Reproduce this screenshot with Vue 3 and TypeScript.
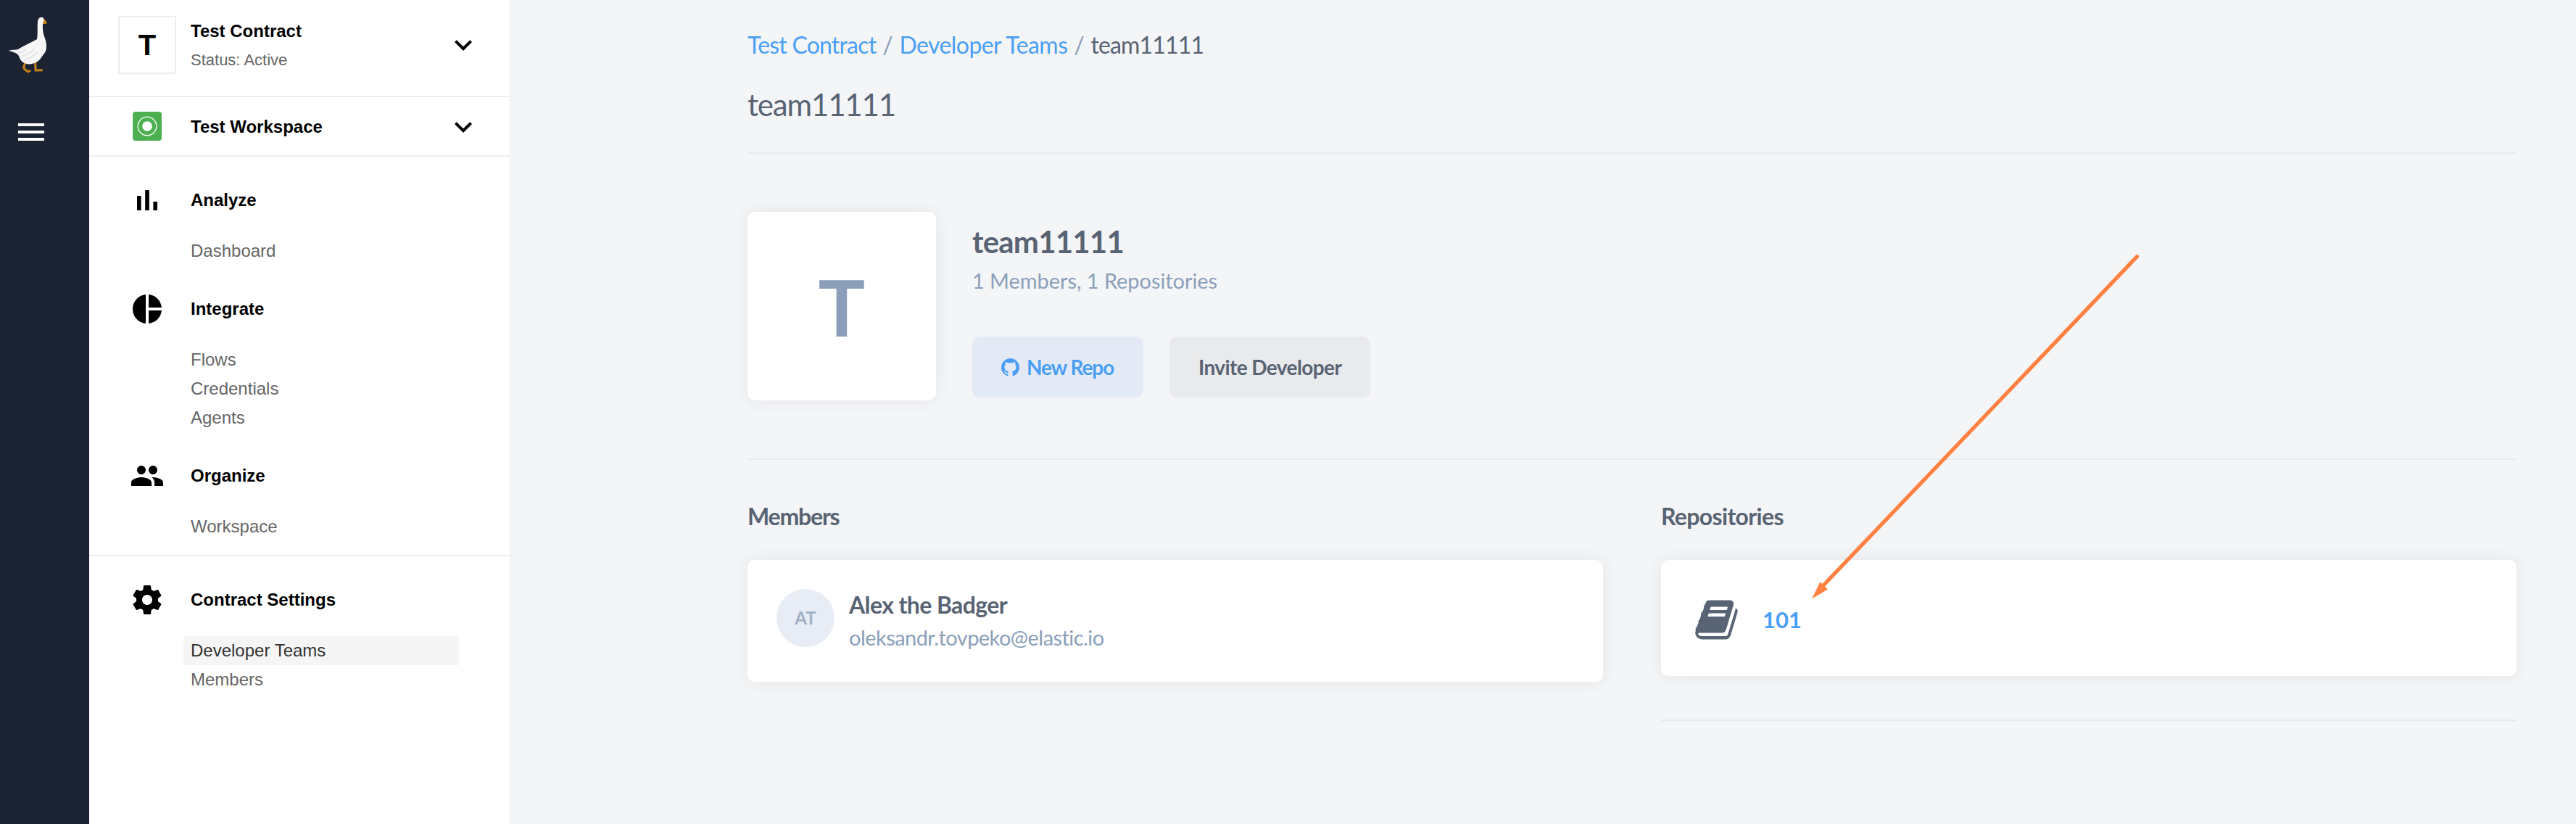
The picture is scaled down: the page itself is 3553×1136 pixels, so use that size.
<script setup lang="ts">
interface NavSection {
  title: string
  icon: string
  items: string[]
  separated?: boolean
}

const activeItem = 'Developer Teams'

const sections: NavSection[] = [
  {
    title: 'Analyze',
    icon: 'M5 9h2.400v10H5zM10.600 5h2.800v14h-2.800zM16.200 13H19v6h-2.800zM7 9h.8v10H7z',
    items: ['Dashboard'],
  },
  {
    title: 'Integrate',
    icon: 'M11 2v20c-5.07-.5-9-4.79-9-10s3.93-9.5 9-10zm2.03 0v8.99H22c-.47-4.74-4.24-8.52-8.97-8.99zm0 11.01V22c4.74-.47 8.5-4.25 8.97-8.99h-8.97z',
    items: ['Flows', 'Credentials', 'Agents'],
  },
  {
    title: 'Organize',
    icon: 'M16 11c1.66 0 2.99-1.34 2.99-3S17.66 5 16 5c-1.66 0-3 1.34-3 3s1.34 3 3 3zm-8 0c1.66 0 2.99-1.34 2.99-3S9.66 5 8 5C6.34 5 5 6.34 5 8s1.34 3 3 3zm0 2c-2.33 0-7 1.17-7 3.5V19h14v-2.5c0-2.33-4.67-3.5-7-3.5zm8 0c-.29 0-.62.02-.97.05 1.16.84 1.97 1.97 1.97 3.45V19h6v-2.5c0-2.33-4.67-3.5-7-3.5z',
    items: ['Workspace'],
  },
  {
    title: 'Contract Settings',
    icon: 'M19.43 12.98c.04-.32.07-.64.07-.98s-.03-.66-.07-.98l2.11-1.65c.19-.15.24-.42.12-.64l-2-3.46c-.12-.22-.39-.3-.61-.22l-2.49 1c-.52-.4-1.08-.73-1.690-.98l-.38-2.65C14.460 2.180 14.250 2 14 2h-4c-.25 0-.46.18-.49.42l-.38 2.65c-.61.25-1.170.59-1.690.98l-2.490-1c-.23-.09-.49 0-.61.22l-2 3.460c-.13.22-.07.49.12.64l2.110 1.650c-.04.32-.07.65-.07.98s.03.66.07.98l-2.110 1.650c-.19.15-.24.42-.12.64l2 3.460c.12.22.39.3.61.22l2.490-1c.52.4 1.080.73 1.690.98l.38 2.650c.03.24.24.42.49.42h4c.25 0 .46-.18.49-.42l.38-2.650c.61-.25 1.170-.59 1.690-.98l2.490 1c.23.09.49 0 .61-.22l2-3.460c.12-.22.07-.49-.12-.64l-2.110-1.650zM12 15.500c-1.930 0-3.500-1.570-3.500-3.500s1.570-3.500 3.500-3.500 3.500 1.570 3.500 3.500-1.570 3.500-3.500 3.500z',
    items: ['Developer Teams', 'Members'],
    separated: true,
  },
]
</script>

<template>
  <div class="app">
    <aside class="rail">
      <svg class="goose" width="60" height="80" viewBox="10 22 60 80">
        <path d="M36 84c-1 4-4 6-3 10l3 3 3 2 3-2" fill="none" stroke="#c88415" stroke-width="3" />
        <path d="M48.500 84l.7 13 9.500-.2" fill="none" stroke="#c88415" stroke-width="3" />
        <path d="M59.500 25.500l3.500 3 2 4-6 .4z" fill="#d08a14" />
        <path d="M52 29c.5-3.500 3-5.200 5.500-5.200 2 0 3.200 1.300 3 3.200-.2 2-1.300 3.500-1.500 6.500-.4 6 .2 12 2.500 18 2 5 3 10 2.300 16-.8 5-4.800 8.500-7.300 12.500-3 4.500-9.500 8.500-16.500 8.500-5.500-.5-10.500-3-12.500-7.500-1-2.500-1.300-4-3.500-6.500-3.500-2.500-8-3.500-12-4.500 3-1.500 9-1 13-2C32 63 43 59 51 54c1.300-6 .3-16 1-25z" fill="#f6f6f7" />
        <path d="M29 79c6-4 13-5 18-11M33 83c8-2 14-6 19-12M25 73c5 0 8-2 11-5" fill="none" stroke="#dedee2" stroke-width="1.200" />
      </svg>
      <div class="burger"><i></i><i></i><i></i></div>
    </aside>

    <nav class="sidebar">
      <header class="contract">
        <div class="contract-logo">T</div>
        <div class="contract-text">
          <div class="strong">Test Contract</div>
          <div class="status">Status: Active</div>
        </div>
        <svg class="chevron" viewBox="0 0 24 24"><path d="M7.410 8.590L12 13.170l4.590-4.580L18 10l-6 6-6-6z" /></svg>
      </header>
      <div class="workspace">
        <svg class="workspace-icon" viewBox="0 0 40 40">
          <rect width="40" height="40" rx="4" fill="#4caf50" />
          <circle cx="20" cy="20" r="12.800" fill="none" stroke="#fff" stroke-width="1.300" />
          <circle cx="20" cy="20" r="6.800" fill="#fff" />
        </svg>
        <div class="strong workspace-name">Test Workspace</div>
        <svg class="chevron" viewBox="0 0 24 24"><path d="M7.410 8.590L12 13.170l4.590-4.580L18 10l-6 6-6-6z" /></svg>
      </div>
      <section v-for="s in sections" :key="s.title" class="nav-section" :class="{ separated: s.separated }">
        <div class="nav-head">
          <svg class="nav-icon" viewBox="0 0 24 24"><path :d="s.icon" /></svg>
          <span>{{ s.title }}</span>
        </div>
        <ul class="nav-items">
          <li v-for="i in s.items" :key="i" :class="{ active: i === activeItem }">{{ i }}</li>
        </ul>
      </section>
    </nav>

    <main class="main">
      <div class="crumbs">
        <a class="crumb-contract">Test Contract</a><span class="sep">/</span><a class="crumb-teams">Developer Teams</a><span class="sep">/</span><span class="crumb-current">team11111</span>
      </div>
      <h1>team11111</h1>
      <hr />
      <div class="team">
        <div class="team-logo card">T</div>
        <div class="team-info">
          <h2>team11111</h2>
          <p class="team-meta">1 Members, 1 Repositories</p>
          <div class="actions">
            <button class="btn btn-repo">
              <svg class="github" viewBox="128 128 1536 1536"><path d="M896 128q209 0 385.500 103t279.500 279.500 103 385.500q0 251-146.500 451.500t-378.500 277.500q-27 5-40-7t-13-30q0-3 .5-76.500t.5-134.500q0-97-52-142 57-6 102.500-18t94-39 81-66.500 53-105 20.500-150.500q0-119-79-206 37-91-8-204-28-9-81 11t-92 44l-38 24q-93-26-192-26t-192 26q-16-11-42.500-27t-83.500-38.500-85-13.500q-45 113-8 204-79 87-79 206 0 85 20.500 150t52.500 105 80.500 67 94 39 102.500 18q-39 36-49 103-21 10-45 15t-57 5-65.500-21.500-55.500-62.500q-19-32-48.500-52t-49.500-24l-20-3q-21 0-29 4.500t-5 11.500 9 14 13 12l7 5q22 10 43.500 38t31.500 51l10 23q13 38 44 61.500t67 30 69.500 7 55.500-3.500l23-4q0 38 .5 88.500t.5 54.500q0 18-13 30t-40 7q-232-77-378.500-277.500t-146.500-451.500q0-209 103-385.500t279.500-279.500 385.500-103z" /></svg>
              <span>New Repo</span>
            </button>
            <button class="btn btn-invite">Invite Developer</button>
          </div>
        </div>
      </div>
      <hr />
      <div class="columns">
        <section>
          <h3 class="members-title">Members</h3>
          <div class="card member">
            <div class="avatar">AT</div>
            <div>
              <div class="member-name">Alex the Badger</div>
              <div class="member-mail">oleksandr.tovpeko@elastic.io</div>
            </div>
          </div>
        </section>
        <section>
          <h3>Repositories</h3>
          <div class="card repo">
            <svg class="book" viewBox="0 0 1792 1792"><path d="M1703 478q40 57 18 129l-275 906q-19 64-76.500 107.500t-122.500 43.500h-923q-77 0-148.500-53.500t-99.500-131.500q-24-67-2-127 0-4 3-27t4-37q1-8-3-21.500t-3-19.500q2-11 8-21t16.500-23.500 16.500-23.500q23-38 45-91.500t30-91.500q3-10 .5-30t-.5-28q3-11 17-28t17-23q21-36 42-92t25-90q1-9-2.500-32t.5-28q4-13 22-30.500t22-22.500q19-26 42.500-84.500t27.500-96.500q1-8-3-25.500t-2-26.500q2-8 9-18t18-23 17-21q8-12 16.500-30.500t15-35 16-36 19.500-32 26.500-23.500 36-11.500 47.500 5.500l-1 3q38-9 51-9h761q74 0 114 56t18 130l-274 906q-36 119-71.500 153.500t-128.500 34.500h-869q-27 0-38 15-11 16-1 43 24 70 144 70h923q29 0 56-15.500t35-41.500l300-987q7-22 5-57 38 15 59 43zm-1064 2q-4 13 2 22.500t20 9.500h608q13 0 25.500-9.500t16.500-22.500l21-64q4-13-2-22.500t-20-9.500h-608q-13 0-25.500 9.500t-16.500 22.500zm-83 256q-4 13 2 22.500t20 9.500h608q13 0 25.500-9.500t16.500-22.500l21-64q4-13-2-22.500t-20-9.500h-608q-13 0-25.500 9.500t-16.500 22.500z" /></svg>
            <a class="repo-name">101</a>
          </div>
          <hr class="repo-rule" />
        </section>
      </div>
    </main>

    <svg class="arrow" width="460" height="484" viewBox="2494 348 460 484">
      <path d="M2947.600 353.700L2513 809" stroke="#ff8142" stroke-width="5.300" stroke-linecap="round" />
      <path d="M2499 825.500L2510.500 802.300L2521 812.500z" fill="#ff8142" />
    </svg>
  </div>
</template>

<style>
body {
  background: #f4f5f7;
}
</style>

<style scoped>
.app {
  position: relative;
  display: flex;
  height: 1136px;
  overflow: hidden;
  background: #f4f5f7;
  font-family: Lato, sans-serif;
  color: #586373;
}
h1, h2, h3, p, ul {
  margin: 0;
  padding: 0;
}
.rail {
  width: 123px;
  flex: none;
  background: #1b2232;
}
.goose {
  display: block;
  margin: 22px 0 0 10px;
}
.burger {
  display: flex;
  flex-direction: column;
  gap: 6px;
  margin: 68px 0 0 25px;
}
.burger i {
  width: 36px;
  height: 4px;
  background: #fff;
}
.sidebar {
  width: 580px;
  flex: none;
  background: #fff;
  border-right: 2px solid #f0f1f1;
  font-family: "Liberation Sans", Arial, sans-serif;
  font-size: 24px;
  color: #666;
}
.contract {
  display: flex;
  height: 132px;
  border-bottom: 2px solid #eee;
}
.contract-logo {
  box-sizing: border-box;
  width: 80px;
  height: 80px;
  margin: 22px 20px 0 40px;
  border: 2px solid #eee;
  text-align: center;
  font-size: 40px;
  font-weight: 700;
  line-height: 76px;
  color: #000;
}
.strong {
  font-weight: 700;
  line-height: 32px;
  color: #000;
}
.contract-text {
  flex: 1;
  padding-top: 27px;
}
.status {
  margin-top: 8px;
  font-size: 22px;
  line-height: 32px;
}
.chevron {
  width: 48px;
  height: 48px;
  margin: 38px 40px 0 0;
}
.workspace {
  display: flex;
  height: 80px;
  border-bottom: 2px solid #eee;
}
.workspace-icon {
  width: 40px;
  height: 40px;
  margin: 20px 40px 0 60px;
}
.workspace-name {
  flex: 1;
  padding-top: 25px;
}
.workspace .chevron {
  margin-top: 17px;
}
.nav-section {
  padding-top: 40px;
}
.nav-section.separated {
  margin-top: 19px;
  border-top: 2px solid #eee;
}
.nav-head {
  display: flex;
  align-items: center;
  height: 40px;
  font-weight: 700;
  color: #000;
}
.nav-head span {
  line-height: 42px;
}
.nav-icon {
  width: 48px;
  height: 48px;
  margin: 0 36px 0 56px;
}
.nav-items {
  margin: 30px 70px 0 130px;
  list-style: none;
  line-height: 40px;
}
.nav-items li {
  padding-left: 10px;
}
.nav-items .active {
  background: #f5f5f5;
  color: #333;
}
.main {
  flex: 1;
  padding: 42px 82px 0 326px;
}
hr {
  height: 2px;
  margin: 0;
  border: 0;
  background: #e9ebec;
}
.crumbs {
  display: flex;
  font-size: 32px;
  line-height: 40px;
}
a {
  color: #4a9ff5;
}
.sep {
  width: 32px;
  text-align: center;
  color: #8b9fba;
}
.crumb-contract {
  letter-spacing: -0.8px;
}
.crumb-teams {
  letter-spacing: -0.55px;
}
.crumb-current {
  letter-spacing: -0.85px;
}
h1 {
  margin: 34px 0 38px;
  font-size: 42px;
  font-weight: 400;
  line-height: 56px;
  letter-spacing: -1.15px;
}
.card {
  border-radius: 10px;
  background: #fff;
  box-shadow: 0 0 24px rgba(0, 0, 0, 0.07);
}
.team {
  display: flex;
  gap: 50px;
  height: 340px;
  padding-top: 80px;
}
.team-logo {
  width: 260px;
  height: 260px;
  text-align: center;
  font-size: 108px;
  font-weight: 700;
  line-height: 260px;
  color: #8b9fba;
}
h2 {
  margin-top: 16px;
  font-size: 42px;
  line-height: 50px;
  letter-spacing: -0.8px;
}
.team-meta {
  margin-top: 9px;
  font-size: 29px;
  line-height: 40px;
  letter-spacing: -0.06px;
  color: #8b9fba;
}
.actions {
  display: flex;
  gap: 36px;
  margin-top: 57px;
}
.btn {
  display: flex;
  align-items: center;
  height: 84px;
  padding: 0 0 0 40px;
  border: 0;
  border-radius: 10px;
  font: 700 28px/84px Lato, sans-serif;
}
.btn-repo {
  width: 236px;
  background: #e3eaf6;
  color: #4a9ff5;
  letter-spacing: -1.05px;
}
.btn-invite {
  width: 277px;
  background: #e9eaec;
  color: #586373;
  letter-spacing: -0.6px;
}
.github {
  width: 25px;
  height: 25px;
  margin-right: 10px;
  fill: #4a9ff5;
}
.columns {
  display: grid;
  grid-template-columns: 1180px 1180px;
  gap: 80px;
  padding-top: 58px;
}
h3 {
  margin-bottom: 40px;
  font-size: 32px;
  line-height: 40px;
  letter-spacing: -0.65px;
}
h3.members-title {
  letter-spacing: -1.2px;
}
.member {
  display: flex;
  box-sizing: border-box;
  height: 168px;
  padding: 40px;
}
.avatar {
  width: 80px;
  height: 80px;
  margin-right: 20px;
  border-radius: 50%;
  background: #e8edf5;
  text-align: center;
  font-size: 24px;
  font-weight: 700;
  line-height: 80px;
  color: #9fb0c7;
}
.member-name {
  font-size: 32px;
  font-weight: 700;
  line-height: 44px;
  letter-spacing: -0.6px;
}
.member-mail {
  margin-top: 3px;
  font-size: 29px;
  line-height: 40px;
  letter-spacing: -0.55px;
  color: #8b9fba;
}
.repo {
  display: flex;
  align-items: center;
  box-sizing: border-box;
  height: 160px;
  padding: 4px 45px 0;
}
.book {
  width: 63px;
  height: 63px;
  fill: #586373;
}
.repo-name {
  margin-left: 32px;
  font-size: 31px;
  font-weight: 700;
}
.repo-rule {
  margin-top: 60px;
  background: #e8e9f0;
}
.arrow {
  position: absolute;
  left: 2494px;
  top: 348px;
}
</style>
